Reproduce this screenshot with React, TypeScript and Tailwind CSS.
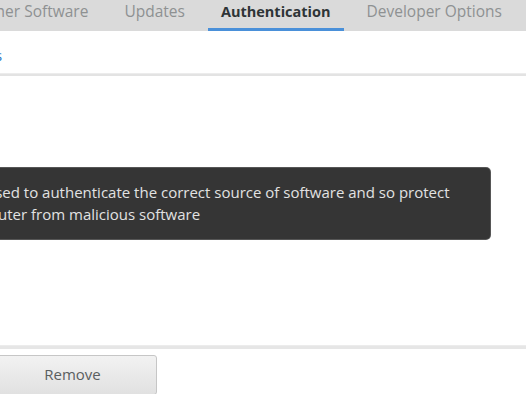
const tabs = [
  { label: "Other Software", active: false },
  { label: "Updates", active: false },
  { label: "Authentication", active: true },
  { label: "Developer Options", active: false },
];

const App = () => {
  return (
    <div
      className="w-[526px] h-[394px] overflow-hidden bg-white flex flex-col"
      style={{ fontFamily: '"Open Sans", "Noto Sans", sans-serif' }}
    >
      {/* tab strip */}
      <div className="h-[31px] shrink-0 bg-[#dadada] flex items-stretch gap-[10px] ml-[-35px]">
        {tabs.map((t) => (
          <div
            key={t.label}
            className={`px-[13px] flex items-center border-b-[3px] pb-[5px] ${
              t.active
                ? "border-[#4a90d9] text-[#2e3436] font-bold text-[14.5px]"
                : "border-transparent text-[#8e9192] text-[15.5px]"
            }`}
          >
            {t.label}
          </div>
        ))}
      </div>

      {/* key list header */}
      <div className="h-[42px] shrink-0 flex items-center pt-[6px] ml-[-30px] text-[15px] text-[#2a76c6]">
        Keys
      </div>
      <div className="h-[3px] shrink-0 bg-[#e3e3e3] border-t border-[#ececec]" />

      <div className="flex-1 flex flex-col">
        <div className="h-[91px]" />
        <div className="ml-[-91px] w-[582px] h-[73px] rounded-[5px] bg-[#353535] border border-[#8a8a8a]/40 text-[#e2e2e2] text-[15px] leading-[22px] pl-[13px] pt-[13px]">
          <div>Keys are used to authenticate the correct source of software and so protect</div>
          <div>your computer from malicious software</div>
        </div>
      </div>

      <div className="h-[4px] shrink-0 bg-[#e6e6e6] border-t border-[#ececec]" />
      <div className="h-[45px] shrink-0 pt-[6px]">
        <button className="ml-[-40px] w-[197px] h-[40px] rounded-[3px] border border-[#c6c6c6] bg-gradient-to-b from-[#f2f2f2] to-[#e1e1e1] text-[#5a5e60] text-[15px] pl-[28px] pb-[2px]">
          Remove
        </button>
      </div>
    </div>
  );
};

export default App;
